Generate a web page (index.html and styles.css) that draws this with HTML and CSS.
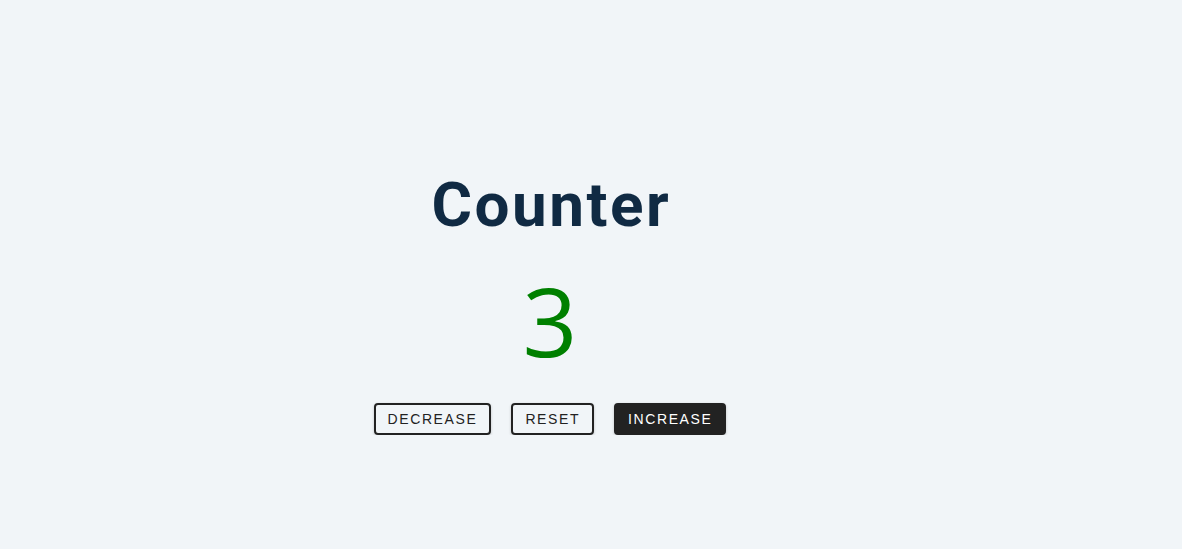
FILE: index.html
```html
<!DOCTYPE html>
<html lang="en">
<head>
<meta charset="utf-8">
<title>Counter</title>
<link rel="stylesheet" href="styles.css">
</head>
<body>
<main class="container">
  <h2 class="title">Counter</h2>
  <span class="value">3</span>
  <div class="button-container">
    <button class="btn decrease">decrease</button>
    <button class="btn reset">reset</button>
    <button class="btn increase">increase</button>
  </div>
</main>
</body>
</html>
```
FILE: styles.css
```css
* { box-sizing: border-box; margin: 0; padding: 0; }
body {
  background: #f1f5f8;
  font-family: "Open Sans", sans-serif;
  color: #102a43;
}
.container {
  width: 1100px;
  padding-top: 166px;
  display: flex;
  flex-direction: column;
  align-items: center;
  text-align: center;
}
.title {
  font-family: Roboto, sans-serif;
  font-weight: 700;
  font-size: 62px;
  letter-spacing: 2.5px;
  padding-left: 2.5px;
  line-height: 1.25;
  color: #102a43;
}
.value {
  font-family: "Open Sans", sans-serif;
  font-size: 96px;
  line-height: 1.5;
  color: green;
  margin-top: 4px;
}
.button-container {
  display: flex;
  gap: 20px;
  margin-top: 11px;
}
.btn {
  font-family: "Liberation Sans", Arial, sans-serif;
  text-transform: uppercase;
  font-size: 14px;
  letter-spacing: 1.6px;
  background: transparent;
  color: #222;
  border: 2px solid #222;
  border-radius: 4px;
  padding: 6px 12px;
  height: 32px;
  box-shadow: 0 1px 3px rgba(0,0,0,0.2);
  cursor: pointer;
}
.btn.increase {
  background: #222;
  color: #fff;
}
```
